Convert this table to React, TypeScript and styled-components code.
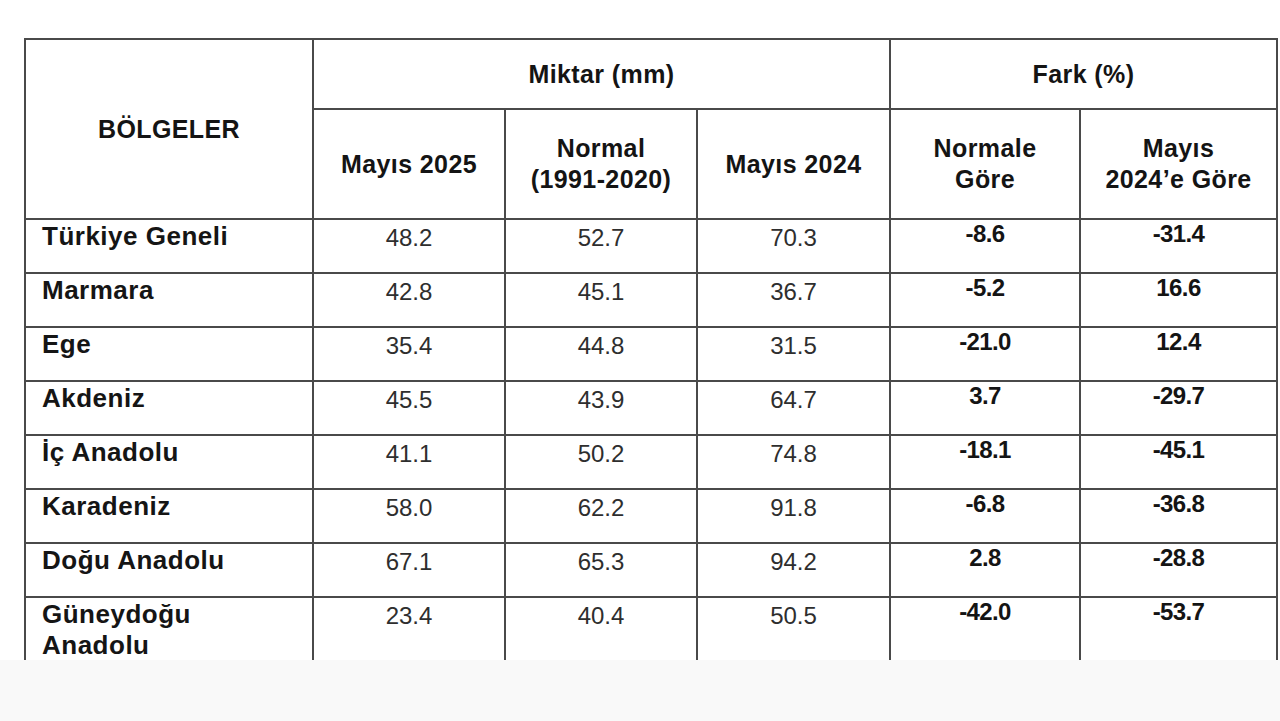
import React from 'react'
import styled, { createGlobalStyle } from 'styled-components'

const GlobalStyle = createGlobalStyle`
    html, body {
        margin: 0;
        padding: 0;
        background: #ffffff;
    }
    body {
        font-family: "Liberation Sans", Arial, sans-serif;
        color: #111;
    }
`

const Page = styled.div`
    width: 1280px;
    height: 721px;
    display: flex;
    flex-direction: column;
    overflow: hidden;
`

const Sheet = styled.div`
    flex-shrink: 0;
    padding: 38px 0 0 24px;
    height: 660px;
    box-sizing: border-box;
    overflow: hidden;
    background: #fff;
`

const Footer = styled.div`
    flex: 1;
    background: #f9f9f9;
`

const Table = styled.table`
    border-collapse: collapse;
    table-layout: fixed;
    width: 1252px;
    border: 2px solid #444;
    border-bottom: none;
`

const HeadCell = styled.th<{ $h?: number }>`
    border: 2px solid #4a4a4a;
    height: ${(p) => p.$h ?? 50}px;
    padding: 0;
    font-size: 25px;
    font-weight: 700;
    line-height: 31px;
    text-align: center;
    vertical-align: middle;
    color: #141414;
    letter-spacing: 0.4px;
`

const Row = styled.tr`
    height: 54px;
`

const LabelCell = styled.td`
    border: 2px solid #4a4a4a;
    padding: 1px 0 0 16px;
    vertical-align: top;
    font-size: 26px;
    font-weight: 700;
    line-height: 31px;
    color: #151515;
    letter-spacing: 0.5px;
`

const ValueCell = styled.td`
    border: 2px solid #4a4a4a;
    padding: 4px 0 0;
    vertical-align: top;
    text-align: center;
    font-size: 24px;
    line-height: 28px;
    color: #2e2e2e;
`

const DiffCell = styled.td`
    border: 2px solid #4a4a4a;
    padding: 0;
    vertical-align: top;
    text-align: center;
    font-size: 24px;
    font-weight: 700;
    line-height: 27px;
    color: #141414;
    letter-spacing: -0.6px;
`

type Region = {
    name: React.ReactNode
    may25: string
    normal: string
    may24: string
    diffNormal: string
    diffMay24: string
}

const regions: Region[] = [
    { name: 'Türkiye Geneli', may25: '48.2', normal: '52.7', may24: '70.3', diffNormal: '-8.6', diffMay24: '-31.4' },
    { name: 'Marmara', may25: '42.8', normal: '45.1', may24: '36.7', diffNormal: '-5.2', diffMay24: '16.6' },
    { name: 'Ege', may25: '35.4', normal: '44.8', may24: '31.5', diffNormal: '-21.0', diffMay24: '12.4' },
    { name: 'Akdeniz', may25: '45.5', normal: '43.9', may24: '64.7', diffNormal: '3.7', diffMay24: '-29.7' },
    { name: 'İç Anadolu', may25: '41.1', normal: '50.2', may24: '74.8', diffNormal: '-18.1', diffMay24: '-45.1' },
    { name: 'Karadeniz', may25: '58.0', normal: '62.2', may24: '91.8', diffNormal: '-6.8', diffMay24: '-36.8' },
    { name: 'Doğu Anadolu', may25: '67.1', normal: '65.3', may24: '94.2', diffNormal: '2.8', diffMay24: '-28.8' },
    {
        name: (
            <>
                Güneydoğu
                <br />
                Anadolu
            </>
        ),
        may25: '23.4',
        normal: '40.4',
        may24: '50.5',
        diffNormal: '-42.0',
        diffMay24: '-53.7',
    },
]

const App = () => {
    return (
        <Page>
            <GlobalStyle />
            <Sheet>
                <Table>
                    <colgroup>
                        <col style={{ width: 288 }} />
                        <col style={{ width: 192 }} />
                        <col style={{ width: 192 }} />
                        <col style={{ width: 193 }} />
                        <col style={{ width: 190 }} />
                        <col style={{ width: 197 }} />
                    </colgroup>
                    <thead>
                        <tr>
                            <HeadCell rowSpan={2}>BÖLGELER</HeadCell>
                            <HeadCell colSpan={3} $h={68}>
                                Miktar (mm)
                            </HeadCell>
                            <HeadCell colSpan={2} $h={68}>
                                Fark (%)
                            </HeadCell>
                        </tr>
                        <tr>
                            <HeadCell $h={108}>Mayıs 2025</HeadCell>
                            <HeadCell $h={108}>
                                Normal
                                <br />
                                (1991-2020)
                            </HeadCell>
                            <HeadCell $h={108}>Mayıs 2024</HeadCell>
                            <HeadCell $h={108}>
                                Normale
                                <br />
                                Göre
                            </HeadCell>
                            <HeadCell $h={108}>
                                Mayıs
                                <br />
                                2024’e Göre
                            </HeadCell>
                        </tr>
                    </thead>
                    <tbody>
                        {regions.map((r, i) => (
                            <Row key={i}>
                                <LabelCell>{r.name}</LabelCell>
                                <ValueCell>{r.may25}</ValueCell>
                                <ValueCell>{r.normal}</ValueCell>
                                <ValueCell>{r.may24}</ValueCell>
                                <DiffCell>{r.diffNormal}</DiffCell>
                                <DiffCell>{r.diffMay24}</DiffCell>
                            </Row>
                        ))}
                    </tbody>
                </Table>
            </Sheet>
            <Footer />
        </Page>
    )
}

export default App
